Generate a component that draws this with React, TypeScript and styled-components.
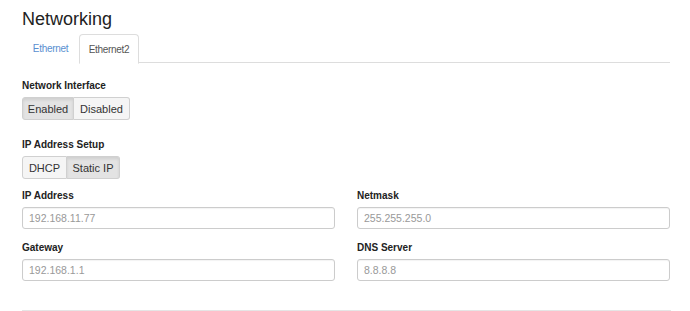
import React from "react";
import styled, { createGlobalStyle } from "styled-components";

const Global = createGlobalStyle`
  html, body { margin: 0; padding: 0; background: #fff; }
  body { font-family: "Liberation Sans", Arial, sans-serif; color: #333; }
  * { box-sizing: border-box; }
`;

const Page = styled.div`
  width: 690px;
  height: 311px;
  padding: 8px 20px 0 22px;
  overflow: hidden;
`;

const Title = styled.h1`
  margin: 0;
  font-size: 18px;
  font-weight: 400;
  line-height: 22px;
  color: #222;
`;

const Tabs = styled.div`
  display: flex;
  margin-top: 4px;
  border-bottom: 1px solid #ddd;
  height: 29px;
`;

const Tab = styled.div<{ $active?: boolean }>`
  width: ${(p) => (p.$active ? "60px" : "57px")};
  height: ${(p) => (p.$active ? "30px" : "29px")};
  display: flex;
  align-items: center;
  justify-content: center;
  font-size: 10px;
  letter-spacing: -0.3px;
  color: ${(p) => (p.$active ? "#555" : "#5a8fd0")};
  background: #fff;
  border: 1px solid ${(p) => (p.$active ? "#ddd" : "transparent")};
  border-bottom-color: ${(p) => (p.$active ? "#fff" : "transparent")};
  border-radius: 4px 4px 0 0;
`;

const Section = styled.div<{ $top: number }>`
  margin-top: ${(p) => p.$top}px;
  display: flex;
  flex-direction: column;
  gap: 5px;
`;

const Label = styled.div`
  font-size: 10px;
  font-weight: 700;
  line-height: 12px;
  color: #222;
`;

const Group = styled.div`
  display: flex;
  align-self: flex-start;
`;

const GroupButton = styled.div<{ $active?: boolean; $w: number }>`
  width: ${(p) => p.$w}px;
  height: 23px;
  display: flex;
  align-items: center;
  justify-content: center;
  font-size: 11px;
  color: #333;
  border: 1px solid #d0d0d0;
  background: ${(p) => (p.$active ? "#e3e3e3" : "#f5f5f5")};
  box-shadow: ${(p) => (p.$active ? "inset 0 2px 3px rgba(0,0,0,0.09)" : "none")};
  &:first-child { border-radius: 3px 0 0 3px; }
  &:last-child { border-radius: 0 3px 3px 0; border-left: none; }
`;

const Grid = styled.div`
  display: grid;
  grid-template-columns: 313px 313px;
  column-gap: 22px;
  row-gap: 13px;
  margin-top: 11px;
`;

const Field = styled.div`
  display: flex;
  flex-direction: column;
  gap: 5px;
`;

const Input = styled.div`
  height: 22px;
  border: 1px solid #ccc;
  border-radius: 3px;
  padding: 0 6px;
  display: flex;
  align-items: center;
  font-size: 10.5px;
  color: #999;
  box-shadow: inset 0 1px 1px rgba(0,0,0,0.05);
`;

const Divider = styled.div`
  margin-top: 29px;
  width: 649px;
  border-top: 1px solid #e5e5e5;
`;

export default function App() {
  return (
    <Page>
      <Global />
      <Title>Networking</Title>
      <Tabs>
        <Tab>Ethernet</Tab>
        <Tab $active>Ethernet2</Tab>
      </Tabs>
      <Section $top={17}>
        <Label>Network Interface</Label>
        <Group>
          <GroupButton $active $w={52}>Enabled</GroupButton>
          <GroupButton $w={56}>Disabled</GroupButton>
        </Group>
      </Section>
      <Section $top={19}>
        <Label>IP Address Setup</Label>
        <Group>
          <GroupButton $w={45}>DHCP</GroupButton>
          <GroupButton $active $w={53}>Static IP</GroupButton>
        </Group>
      </Section>
      <Grid>
        <Field>
          <Label>IP Address</Label>
          <Input>192.168.11.77</Input>
        </Field>
        <Field>
          <Label>Netmask</Label>
          <Input>255.255.255.0</Input>
        </Field>
        <Field>
          <Label>Gateway</Label>
          <Input>192.168.1.1</Input>
        </Field>
        <Field>
          <Label>DNS Server</Label>
          <Input>8.8.8.8</Input>
        </Field>
      </Grid>
      <Divider />
    </Page>
  );
}
